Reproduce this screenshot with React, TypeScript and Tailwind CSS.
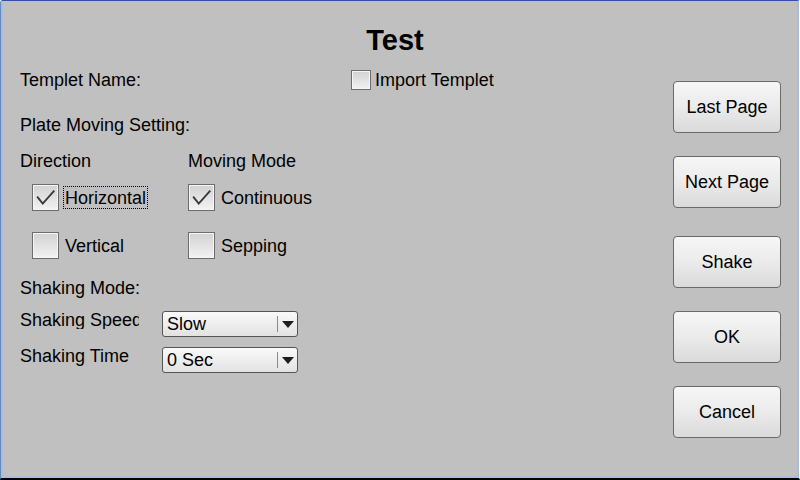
import React from 'react';

function CheckBox({ size, checked = false }: { size: number; checked?: boolean }) {
  return (
    <div
      className="shrink-0 border border-[#6c6c6c] bg-gradient-to-b from-[#d2d2d2] to-[#f2f2f2] shadow-[inset_0_0_0_1px_#f6f6f6]"
      style={{ width: size, height: size }}
    >
      {checked && (
        <svg viewBox="0 0 27 27" className="w-full h-full">
          <polyline points="4.5,12.5 10.5,20 23,6" fill="none" stroke="#383838" strokeWidth="2" />
        </svg>
      )}
    </div>
  );
}

function Combo({ value }: { value: string }) {
  return (
    <div className="flex w-[136px] h-[26px] items-center border border-[#555] rounded-[3px] bg-gradient-to-b from-[#fafafa] to-[#e2e2e2]">
      <span className="flex-1 pl-[4px] leading-none">{value}</span>
      <div className="w-px h-[16px] bg-[#8a8a8a]" />
      <div className="w-[19px] flex justify-center">
        <svg width="12" height="7" viewBox="0 0 12 7">
          <polygon points="0,0 12,0 6,7" fill="#1e1e1e" />
        </svg>
      </div>
    </div>
  );
}

function SideButton({ label, className = '' }: { label: string; className?: string }) {
  return (
    <button
      className={`h-[52px] w-[108px] rounded-[4px] border border-[#6a6a6a] bg-gradient-to-b from-[#f6f6f6] via-[#ebebeb] to-[#dadada] text-black text-[18px] ${className}`}
    >
      {label}
    </button>
  );
}

export default function App() {
  return (
    <div
      className="w-[800px] h-[480px] flex flex-col bg-[#c0c0c0] border-t border-t-[#3050b0] border-l border-l-[#6a88b4] border-r border-r-white border-b-2 border-b-black rounded-t-[3px] text-black text-[18px]"
      style={{ fontFamily: '"Liberation Sans", Arial, sans-serif' }}
    >
      <div className="flex-1 flex flex-col border-x-2 border-b-2 border-[#a6bedc]">
        <div className="h-[62px] pt-[16px] pr-[10px] flex items-center justify-center">
          <h1 className="text-[29px] font-bold leading-none">Test</h1>
        </div>

        <div className="flex flex-1">
          {/* form */}
          <div className="flex-1 flex flex-col pl-[17px]">
            <div className="mt-[5px] h-[24px] flex items-center">
              <span className="w-[331px]">Templet Name:</span>
              <CheckBox size={20} />
              <span className="ml-[4px]">Import Templet</span>
            </div>

            <div className="mt-[21px] h-[24px] flex items-center">Plate Moving Setting:</div>

            <div className="mt-[12px] h-[24px] flex items-center">
              <span className="w-[168px]">Direction</span>
              <span>Moving Mode</span>
            </div>

            <div className="mt-[11px] h-[27px] flex items-center pl-[12px]">
              <div className="w-[156px] flex items-center">
                <CheckBox size={27} checked />
                <span className="ml-[4px] px-[1px] pt-[2px] h-[23px] flex items-center border border-dotted border-black">Horizontal</span>
              </div>
              <CheckBox size={27} checked />
              <span className="ml-[6px] pt-[2px]">Continuous</span>
            </div>

            <div className="mt-[21px] h-[27px] flex items-center pl-[12px]">
              <div className="w-[156px] flex items-center">
                <CheckBox size={27} />
                <span className="ml-[6px] pt-[2px]">Vertical</span>
              </div>
              <CheckBox size={27} />
              <span className="ml-[6px] pt-[2px]">Sepping</span>
            </div>

            <div className="mt-[17px] h-[24px] flex items-center">Shaking Mode:</div>

            <div className="mt-[11px] flex items-start">
              <span className="w-[119px] mr-[23px] leading-[18px] overflow-hidden whitespace-nowrap">Shaking Speed</span>
              <Combo value="Slow" />
            </div>

            <div className="mt-[10px] flex items-start">
              <span className="w-[142px] leading-[18px] whitespace-nowrap">Shaking Time</span>
              <Combo value="0 Sec" />
            </div>
          </div>

          {/* buttons */}
          <div className="w-[108px] mr-[16px] flex flex-col">
            <SideButton label="Last Page" className="mt-[18px]" />
            <SideButton label="Next Page" className="mt-[23px]" />
            <SideButton label="Shake" className="mt-[28px]" />
            <SideButton label="OK" className="mt-[23px]" />
            <SideButton label="Cancel" className="mt-[23px]" />
          </div>
        </div>
      </div>
    </div>
  );
}
